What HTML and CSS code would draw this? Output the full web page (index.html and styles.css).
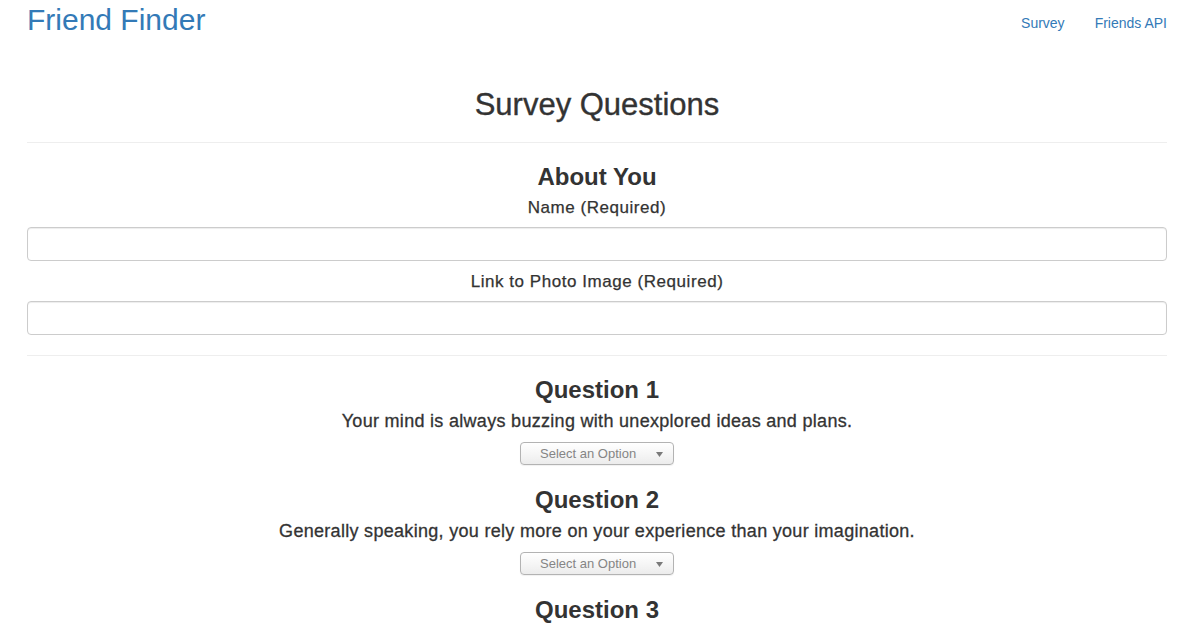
FILE: index.html
```html
<!DOCTYPE html>
<html lang="en">
<head>
<meta charset="utf-8">
<title>Friend Finder</title>
<link rel="stylesheet" href="styles.css">
</head>
<body>
<div class="container">
  <nav class="navbar">
    <a class="brand" href="#">Friend Finder</a>
    <div class="nav-links">
      <a href="#">Survey</a>
      <a href="#">Friends API</a>
    </div>
  </nav>

  <h1 class="page-title">Survey Questions</h1>
  <hr class="rule">

  <section class="about">
    <h3 class="section-title">About You</h3>
    <div class="form-group">
      <label class="field-label" for="name">Name (Required)</label>
      <input class="field-input" id="name" type="text">
    </div>
    <div class="form-group">
      <label class="field-label" for="photo">Link to Photo Image (Required)</label>
      <input class="field-input" id="photo" type="text">
    </div>
  </section>
  <hr class="rule">

  <section class="question">
    <h3 class="section-title">Question 1</h3>
    <p class="question-text">Your mind is always buzzing with unexplored ideas and plans.</p>
    <div class="select-wrap">
      <select class="select"><option>Select an Option</option></select>
      <svg class="select-arrow" width="7" height="5" viewBox="0 0 7 5"><path d="M0 0H7L3.5 5Z" fill="#7a7a7a"/></svg>
    </div>
  </section>

  <section class="question">
    <h3 class="section-title">Question 2</h3>
    <p class="question-text">Generally speaking, you rely more on your experience than your imagination.</p>
    <div class="select-wrap">
      <select class="select"><option>Select an Option</option></select>
      <svg class="select-arrow" width="7" height="5" viewBox="0 0 7 5"><path d="M0 0H7L3.5 5Z" fill="#7a7a7a"/></svg>
    </div>
  </section>

  <section class="question">
    <h3 class="section-title">Question 3</h3>
    <p class="question-text">You find it easy to stay relaxed and focused even when there is some pressure.</p>
    <div class="select-wrap">
      <select class="select"><option>Select an Option</option></select>
      <svg class="select-arrow" width="7" height="5" viewBox="0 0 7 5"><path d="M0 0H7L3.5 5Z" fill="#7a7a7a"/></svg>
    </div>
  </section>
</div>
</body>
</html>
```

FILE: styles.css
```css
* { box-sizing: border-box; }

html, body {
  margin: 0;
  padding: 0;
  background: #fff;
}

body {
  font-family: "Liberation Sans", Arial, Helvetica, sans-serif;
  color: #333;
  overflow: hidden;
}

.container {
  width: 1140px;
  margin-left: 27px;
}

.navbar {
  display: flex;
  justify-content: space-between;
  align-items: flex-start;
  height: 40px;
}

.brand {
  font-size: 30px;
  line-height: 40px;
  color: #337ab7;
  text-decoration: none;
}

.nav-links {
  display: flex;
  gap: 30px;
  padding-top: 13px;
}

.nav-links a {
  font-size: 14px;
  line-height: 20px;
  color: #337ab7;
  text-decoration: none;
}

.page-title {
  margin: 48px 0 0;
  font-size: 31px;
  line-height: 34px;
  font-weight: 500;
  text-align: center;
  -webkit-text-stroke: 0.35px #333;
}

.rule {
  margin: 20px 0;
  border: 0;
  border-top: 1px solid #eee;
  height: 0;
}

.section-title {
  margin: 0;
  font-size: 24px;
  line-height: 27px;
  font-weight: bold;
  text-align: center;
}

.about .form-group {
  display: flex;
  flex-direction: column;
}

.about .form-group + .form-group {
  margin-top: 11px;
}

.field-label {
  display: block;
  margin-bottom: 9px;
  font-size: 17px;
  line-height: 20px;
  letter-spacing: 0.55px;
  text-align: center;
  -webkit-text-stroke: 0.25px #333;
}

.about .form-group:first-of-type .field-label {
  margin-top: 8px;
}

.field-input {
  display: block;
  width: 100%;
  height: 34px;
  padding: 6px 12px;
  border: 1px solid #ccc;
  border-radius: 4px;
  background: #fff;
  box-shadow: inset 0 1px 1px rgba(0, 0, 0, 0.075);
  font: inherit;
  font-size: 14px;
}

.question {
  display: flex;
  flex-direction: column;
  align-items: center;
  margin-bottom: 21px;
}

.question-text {
  margin: 8px 0 11px;
  font-size: 18px;
  line-height: 20px;
  letter-spacing: 0.3px;
  text-align: center;
  white-space: nowrap;
  -webkit-text-stroke: 0.3px #333;
}

.select-wrap {
  position: relative;
  width: 154px;
  height: 23px;
}

.select {
  -webkit-appearance: none;
  appearance: none;
  display: block;
  width: 100%;
  height: 23px;
  margin: 0;
  padding: 0 0 0 19px;
  border: 1px solid #b3b3b3;
  border-radius: 4px;
  background: linear-gradient(#ffffff, #f6f6f6 50%, #ececec);
  box-shadow: 0 1px 1px rgba(0, 0, 0, 0.06);
  font-family: "Liberation Sans", Arial, sans-serif;
  font-size: 13px;
  line-height: 21px;
  color: #858585;
}

.select-arrow {
  position: absolute;
  left: 136px;
  top: 10px;
  pointer-events: none;
}
```
